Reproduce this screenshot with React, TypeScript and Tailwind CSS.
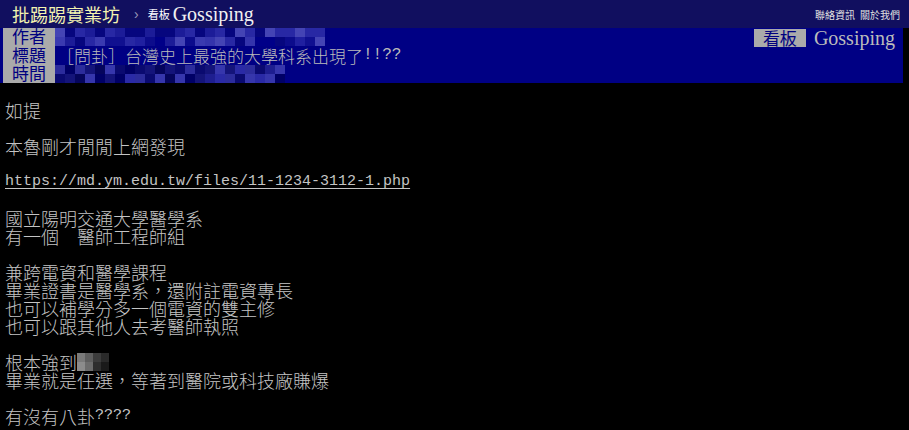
const cjk = { fontFamily: '"Noto Sans CJK TC", "Noto Sans CJK SC", sans-serif' };

// pixelated blur colours for the hidden author/time fields
const navyPalette = ['#1c1c98', '#2828a4', '#0c0c8c', '#3434ac', '#101090', '#4444b4', '#06067e', '#2020a0', '#3a3ab0', '#000088'];
const darkPalette = ['#14147a', '#2a2aa6', '#000066', '#3636ac', '#0a0a70', '#1e1e90', '#05055c', '#2c2c9c'];
const greyPalette = [
  ['#7a7a7a', '#5e5e5e', '#3c3c3c', '#2a2a2a'],
  ['#8c8c8c', '#6c6c6c', '#2e2e2e', '#1a1a1a'],
];

function Mosaic({ cols, palette, seed }: { cols: number; palette: string[]; seed: number }) {
  const rows = [0, 1];
  return (
    <div className="flex flex-col">
      {rows.map((r) => (
        <div key={r} className="flex h-[9px]">
          {Array.from({ length: cols }).map((_, c) => {
            const idx = (c * 7 + r * 13 + seed * 5 + ((c * (r + 3)) % 5) + ((c * c) % 3)) % palette.length;
            return <div key={c} className="w-[10px] h-[9px]" style={{ backgroundColor: palette[idx] }} />;
          })}
        </div>
      ))}
    </div>
  );
}

function TopBar() {
  return (
    <div className="h-[28px] bg-[#110f5f] flex items-center justify-between pl-[12px] pr-[9px]">
      <div className="flex items-center">
        <span className="text-[18px] leading-[28px] text-[#f3f3b0]" style={cjk}>批踢踢實業坊</span>
        <span className="ml-[14px] text-[14px] text-[#9a9ab8] font-['Liberation_Sans',sans-serif]">›</span>
        <span className="ml-[9px] text-[11px] text-white" style={cjk}>看板</span>
        <span className="ml-[3px] text-[20px] leading-[28px] text-[#f0f0f0] font-['Liberation_Serif',serif]">Gossiping</span>
      </div>
      <div className="flex items-center gap-[5px] text-[10px] text-[#e0e0e0]" style={cjk}>
        <span>聯絡資訊</span>
        <span>關於我們</span>
      </div>
    </div>
  );
}

function MetaLines() {
  return (
    <div className="flex h-[55px] mr-[6px] bg-[#000084] pl-[3px]">
      <div className="w-[52px] bg-[#aaaaaa] flex flex-col items-center text-[17px] text-[#000080]" style={cjk}>
        <div className="h-[18px] leading-[16px]">作者</div>
        <div className="h-[19px] leading-[17px]">標題</div>
        <div className="h-[18px] leading-[16px]">時間</div>
      </div>
      <div className="flex-1 flex flex-col">
        <div className="h-[18px]">
          <Mosaic cols={27} palette={navyPalette} seed={1} />
        </div>
        <div className="h-[19px] leading-[17px] pl-[2px] text-[17px] font-light text-[#bbbbbb] flex items-center" style={cjk}>
          <span>［問卦］台灣史上最強的大學科系出現了</span>
          <span className="text-[16px] font-['Liberation_Mono',monospace]">!!??</span>
        </div>
        <div className="h-[18px]">
          <Mosaic cols={23} palette={darkPalette} seed={3} />
        </div>
      </div>
      <div className="flex items-start pr-[8px]">
        <span className="h-[18px] leading-[17px] mt-[1px] px-[9px] bg-[#aaaaaa] text-[#000080] text-[17px]" style={cjk}>看板</span>
        <span className="ml-[8px] text-[20px] leading-[20px] text-[#bbbbbb] font-['Liberation_Serif',serif]">Gossiping</span>
      </div>
    </div>
  );
}

function Line({ children }: { children?: React.ReactNode }) {
  return <div className="h-[18px] leading-[18px] whitespace-pre flex items-center">{children}</div>;
}

function Body() {
  return (
    <div className="pt-[18px] pl-[5px] text-[18px] font-light text-[#c4c4c4]" style={cjk}>
      <Line>如提</Line>
      <Line />
      <Line>本魯剛才閒閒上網發現</Line>
      <Line />
      <Line>
        <span className="underline underline-offset-[3px] text-[15px] font-normal font-['Liberation_Mono',monospace]">
          https://md.ym.edu.tw/files/11-1234-3112-1.php
        </span>
      </Line>
      <Line />
      <Line>國立陽明交通大學醫學系</Line>
      <Line>有一個　醫師工程師組</Line>
      <Line />
      <Line>兼跨電資和醫學課程</Line>
      <Line>畢業證書是醫學系，還附註電資專長</Line>
      <Line>也可以補學分多一個電資的雙主修</Line>
      <Line>也可以跟其他人去考醫師執照</Line>
      <Line />
      <Line>
        <span>根本強到</span>
        <span className="flex flex-col">
          {greyPalette.map((row, r) => (
            <span key={r} className="flex h-[9px]">
              {row.map((c, i) => (
                <span key={i} className="w-[8px] h-[9px]" style={{ backgroundColor: c }} />
              ))}
            </span>
          ))}
        </span>
      </Line>
      <Line>畢業就是任選，等著到醫院或科技廠賺爆</Line>
      <Line />
      <Line>
        <span>有沒有八卦</span>
        <span className="text-[15px] font-normal font-['Liberation_Mono',monospace]">????</span>
      </Line>
    </div>
  );
}

export default function App() {
  return (
    <div className="w-full h-[430px] bg-black overflow-hidden">
      <TopBar />
      <MetaLines />
      <Body />
    </div>
  );
}
